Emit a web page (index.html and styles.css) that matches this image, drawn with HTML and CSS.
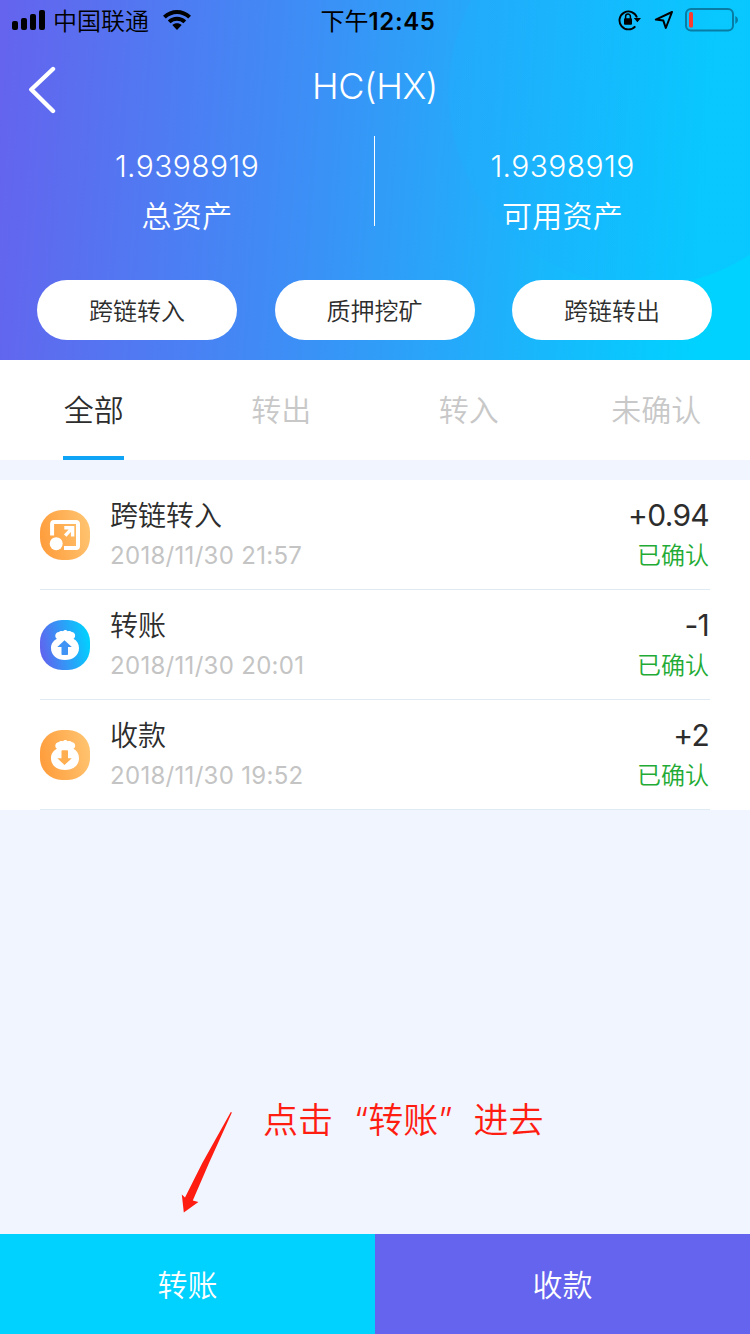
FILE: index.html
```html
<!DOCTYPE html>
<html lang="zh-CN">
<head>
  <meta charset="UTF-8" />
  <meta name="viewport" content="width=device-width, initial-scale=1.0" />
  <title>HC(HX)</title>
  <link rel="stylesheet" href="styles.css">
</head>
<body>
  <div class="page">
    <header class="header">
      <div class="status-bar">
        <div class="status-left">
          <svg class="signal" width="34" height="20" viewBox="0 0 34 20">
            <rect x="0" y="11" width="6" height="9" rx="2" />
            <rect x="9" y="8" width="6" height="12" rx="2" />
            <rect x="18" y="4" width="6" height="16" rx="2" />
            <rect x="27" y="0" width="6" height="20" rx="2" />
          </svg>
          <span class="carrier">中国联通</span>
          <svg class="wifi" width="28" height="20" viewBox="0 0 28 20">
            <path d="M0 5.8C8 -1.9 20 -1.9 28 5.8L25.2 8.6C18.8 2.6 9.2 2.6 2.8 8.6Z" />
            <path d="M4.8 10.5C10 5.6 18 5.6 23.2 10.5L20.4 13.3C16.8 10 11.2 10 7.6 13.3Z" />
            <path d="M9.3 15.1C12 12.7 16 12.7 18.7 15.1L14 20Z" />
          </svg>
        </div>
        <div class="status-time">下午<b>12:45</b></div>
        <div class="status-right">
          <svg class="lock" width="23" height="22" viewBox="0 0 23 22">
            <path d="M17.3 17.3A9 9 0 1 1 19 8.5" fill="none" stroke="#000" stroke-width="1.9" />
            <path d="M15.8 8.9H23L19.4 13.3Z" />
            <rect x="6" y="9.3" width="8" height="6.5" rx="1" />
            <path d="M7.6 10V7.5a2.4 2.4 0 0 1 4.8 0V10" fill="none" stroke="#000" stroke-width="1.5" />
          </svg>
          <svg class="location" width="20" height="20" viewBox="0 0 20 20">
            <path d="M18 2L1.8 9.6L9.3 10.6L11.8 18Z" fill="none" stroke="#000" stroke-width="2" stroke-linejoin="round" />
          </svg>
          <svg class="battery" width="54" height="24" viewBox="0 0 54 24">
            <rect x="1" y="1" width="47" height="21.5" rx="5" fill="none" stroke="#087ca4" stroke-width="2" />
            <rect x="4" y="4" width="4" height="15.5" rx="1.5" fill="#fb3a30" />
            <path d="M50.3 8Q53 9.2 53 12T50.3 16Z" fill="#087ca4" />
          </svg>
        </div>
      </div>

      <div class="title-bar">
        <svg class="back" width="30" height="50" viewBox="0 0 30 50">
          <path d="M26 5L4.3 25.5L26 47" fill="none" stroke="#fff" stroke-width="4.4" stroke-linecap="round" stroke-linejoin="round" />
        </svg>
        <h1>HC(HX)</h1>
      </div>

      <div class="assets">
        <div class="asset">
          <div class="asset-value">1.9398919</div>
          <div class="asset-name">总资产</div>
        </div>
        <div class="asset">
          <div class="asset-value">1.9398919</div>
          <div class="asset-name">可用资产</div>
        </div>
      </div>

      <div class="actions">
        <button>跨链转入</button>
        <button>质押挖矿</button>
        <button>跨链转出</button>
      </div>
    </header>

    <nav class="tabs">
      <a class="tab active">全部</a>
      <a class="tab">转出</a>
      <a class="tab">转入</a>
      <a class="tab">未确认</a>
    </nav>

    <ul class="list">
      <li class="item">
        <svg class="item-icon" width="50" height="50" viewBox="0 0 50 50">
          <defs>
            <linearGradient id="orange" x1="0" y1="0.6" x2="1" y2="0.4">
              <stop offset="0" stop-color="#ff9d3c" />
              <stop offset="1" stop-color="#ffc36f" />
            </linearGradient>
            <linearGradient id="blue" x1="0" y1="0.6" x2="1" y2="0.4">
              <stop offset="0" stop-color="#6064ee" />
              <stop offset="1" stop-color="#00d2ff" />
            </linearGradient>
          </defs>
          <rect width="50" height="50" rx="22" fill="url(#orange)" />
          <path d="M12.1 25.6V14Q12.1 12 14.1 12H36Q38 12 38 14V36Q38 38 36 38H24" fill="none" stroke="#fff" stroke-width="4" />
          <circle cx="16.2" cy="33.7" r="6.5" fill="#fff" />
          <path d="M24.3 17.8H32.6V26.6M32 18.4L25.2 25.6" fill="none" stroke="#fff" stroke-width="3.4" />
        </svg>
        <div class="item-info">
          <div class="item-name">跨链转入</div>
          <div class="item-date">2018/11/30 21:57</div>
        </div>
        <div class="item-result">
          <div class="item-amount">+0.94</div>
          <div class="item-status">已确认</div>
        </div>
      </li>
      <li class="item">
        <svg class="item-icon" width="50" height="50" viewBox="0 0 50 50">
          <rect width="50" height="50" rx="22" fill="url(#blue)" />
          <path d="M17 18.8C14.4 17.6 14.6 12.3 19 12C20 10.8 22 10.9 23 11.3C24.2 9.7 26.5 9.7 27.6 11.3C28.8 10.8 30.8 11 31.6 12C36 12.3 36 17.6 33.4 18.8C36.8 20.6 39 23.6 39 28C39 35.5 33 40 25 40S11 35.5 11 28C11 23.6 13.6 20.6 17 18.8Z" fill="#fff" />
          <path d="M24.5 20.2L31.8 27H28V34.2Q28 35 27.2 35H22.3Q21.5 35 21.5 34.2V27H17.3Z" fill="#3f93f5" />
        </svg>
        <div class="item-info">
          <div class="item-name">转账</div>
          <div class="item-date">2018/11/30 20:01</div>
        </div>
        <div class="item-result">
          <div class="item-amount">-1</div>
          <div class="item-status">已确认</div>
        </div>
      </li>
      <li class="item">
        <svg class="item-icon" width="50" height="50" viewBox="0 0 50 50">
          <rect width="50" height="50" rx="22" fill="url(#orange)" />
          <path d="M17 18.8C14.4 17.6 14.6 12.3 19 12C20 10.8 22 10.9 23 11.3C24.2 9.7 26.5 9.7 27.6 11.3C28.8 10.8 30.8 11 31.6 12C36 12.3 36 17.6 33.4 18.8C36.8 20.6 39 23.6 39 28C39 35.5 33 40 25 40S11 35.5 11 28C11 23.6 13.6 20.6 17 18.8Z" fill="#fff" />
          <path d="M24.5 35L17.3 28.2H21.5V21Q21.5 20.2 22.3 20.2H27.2Q28 20.2 28 21V28.2H31.8Z" fill="#ffae50" />
        </svg>
        <div class="item-info">
          <div class="item-name">收款</div>
          <div class="item-date">2018/11/30 19:52</div>
        </div>
        <div class="item-result">
          <div class="item-amount">+2</div>
          <div class="item-status">已确认</div>
        </div>
      </li>
    </ul>

    <div class="hint">
      <svg class="hint-arrow" width="52" height="104" viewBox="0 0 52 104">
        <path d="M50.8 2L51.9 2.6L29 53L12.8 90.5L18.4 92L3.8 102.5L1.8 84.5L5 87.5L22.3 53Z" fill="#ff1d12" />
      </svg>
      <p class="hint-text"><span>点击</span><span class="hint-quoted">“转账”</span><span>进去</span></p>
    </div>

    <footer class="footer">
      <button class="btn-send">转账</button>
      <button class="btn-receive">收款</button>
    </footer>
  </div>
</body>
</html>
```
FILE: styles.css
```css
* {
  box-sizing: border-box;
}
body {
  margin: 0;
  font-family: Inter, "Noto Sans CJK SC", sans-serif;
  font-weight: 350;
  background: #f0f5ff;
  color: #2d2d2d;
}
button {
  border: none;
  padding: 0;
  font: inherit;
}
svg {
  display: block;
  flex: none;
}
.page {
  width: 750px;
  height: 1334px;
  display: flex;
  flex-direction: column;
  overflow: hidden;
}

/* Header */
.header {
  height: 360px;
  flex: none;
  color: white;
  background:
    radial-gradient(circle at 643px 92px, rgba(26, 176, 255, 0.3) 194px, transparent 195px),
    linear-gradient(94deg, #6464ee 1%, #3c8ff6 41%, #1fb0fb 67%, #00d2ff 93%);
}
.status-bar {
  height: 40px;
  padding: 0 11px 0 12px;
  display: grid;
  grid-template-columns: 1fr auto 1fr;
  align-items: center;
  color: black;
}
.status-left, .status-right {
  display: flex;
  align-items: center;
}
.status-right {
  justify-content: flex-end;
}
.carrier {
  font-size: 24px;
  line-height: 36px;
  margin-left: 7px;
  margin-right: 14px;
  padding-top: 4px;
}
.status-time {
  font-size: 24px;
  line-height: 36px;
  padding: 4px 0 0 5px;
  font-weight: 400;
}
.status-time b {
  font-weight: 600;
  letter-spacing: 0.6px;
}
.location {
  margin: 0 11px 0 13px;
}
.title-bar {
  height: 96px;
  padding: 24px 27px 0 27px;
  display: grid;
  grid-template-columns: 1fr auto 1fr;
  align-items: start;
}
.title-bar h1 {
  margin: 0;
  font-size: 36px;
  line-height: 44px;
  font-weight: 300;
  letter-spacing: -0.4px;
}
.assets {
  height: 90px;
  display: flex;
}
.asset {
  width: 375px;
  text-align: center;
  letter-spacing: 0.3px;
}
.asset:first-child {
  border-right: 1px solid white;
}
.asset-value {
  font-size: 30px;
  line-height: 60px;
  letter-spacing: 0.4px;
}
.asset-name {
  font-size: 30px;
  line-height: 40px;
}
.actions {
  display: flex;
  justify-content: space-between;
  padding: 54px 38px 0 37px;
}
.actions button {
  width: 200px;
  height: 60px;
  padding-bottom: 2px;
  border-radius: 30px;
  background: white;
  color: #2d2d2d;
  font-size: 24px;
}

/* Tabs */
.tabs {
  height: 100px;
  flex: none;
  display: flex;
  background: white;
  margin-bottom: 20px;
}
.tab {
  flex: 1;
  display: flex;
  flex-direction: column;
  align-items: center;
  font-size: 30px;
  line-height: 100px;
  color: #c8c8c8;
}
.active {
  color: #2d2d2d;
}
.active::after {
  content: "";
  width: 61px;
  height: 4px;
  margin-top: -4px;
  background: #0fa4f6;
}

/* Records */
.list {
  list-style: none;
  margin: 0;
  padding: 0 40px;
  background: white;
}
.item {
  height: 110px;
  display: flex;
  align-items: center;
  border-bottom: 1px solid #e0eaf2;
}
.item-info {
  flex: 1;
  margin-left: 20px;
  padding-top: 2px;
}
.item-name {
  font-size: 28px;
  line-height: 40px;
}
.item-date {
  font-size: 24px;
  line-height: 40px;
  font-weight: 400;
  letter-spacing: 0.3px;
  color: #c4c4c4;
}
.item-result {
  text-align: right;
  padding: 2px 1px 0 0;
}
.item-amount {
  font-size: 30px;
  line-height: 38px;
  margin-bottom: 2px;
  font-weight: 400;
  letter-spacing: -0.7px;
}
.item-status {
  font-size: 24px;
  line-height: 40px;
  color: #1fab35;
}

/* Hint above the bottom buttons */
.hint {
  flex: 1;
  display: flex;
  align-items: flex-start;
  padding: 300px 0 0 180px;
  color: #ff1d12;
}
.hint-text {
  display: flex;
  margin: -15px 0 0 31px;
  font-size: 35px;
  line-height: 50px;
}
.hint-quoted {
  margin: 0 21px;
}

/* Bottom buttons */
.footer {
  height: 100px;
  flex: none;
  display: flex;
}
.footer button {
  flex: 1;
  padding-bottom: 3px;
  color: white;
  font-size: 30px;
}
.footer .btn-send {
  background: #00d2ff;
}
.footer .btn-receive {
  background: #6464ee;
}
```
